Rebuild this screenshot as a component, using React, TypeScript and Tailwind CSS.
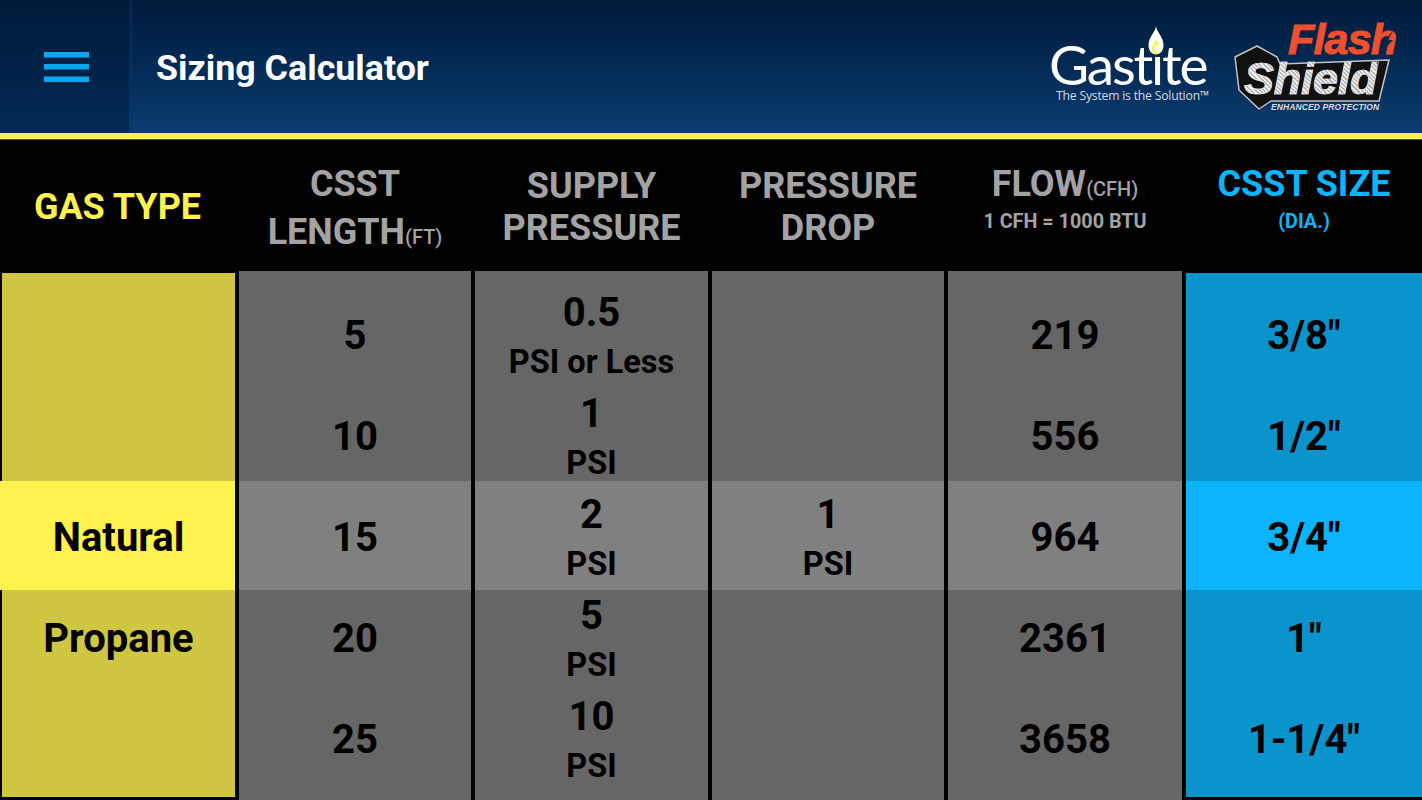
const roboto = "font-['Roboto',sans-serif]";

type Cell = { main?: string; sub?: string };

const columns: { dim: string; band: string; cells: Cell[]; first?: boolean; last?: boolean }[] = [
  { dim: "bg-[#cfc741]", band: "bg-[#fff24f]", first: true, cells: [{}, {}, { main: "Natural" }, { main: "Propane" }, {}] },
  { dim: "bg-[#666666]", band: "bg-[#808080]", cells: [{ main: "5" }, { main: "10" }, { main: "15" }, { main: "20" }, { main: "25" }] },
  {
    dim: "bg-[#666666]",
    band: "bg-[#808080]",
    cells: [
      { main: "0.5", sub: "PSI or Less" },
      { main: "1", sub: "PSI" },
      { main: "2", sub: "PSI" },
      { main: "5", sub: "PSI" },
      { main: "10", sub: "PSI" },
    ],
  },
  { dim: "bg-[#666666]", band: "bg-[#808080]", cells: [{}, {}, { main: "1", sub: "PSI" }, {}, {}] },
  { dim: "bg-[#666666]", band: "bg-[#808080]", cells: [{ main: "219" }, { main: "556" }, { main: "964" }, { main: "2361" }, { main: "3658" }] },
  { dim: "bg-[#0b93cb]", band: "bg-[#0db4fb]", last: true, cells: [{ main: "3/8\u2033" }, { main: "1/2\u2033" }, { main: "3/4\u2033" }, { main: "1\u2033" }, { main: "1-1/4\u2033" }] },
];

function Gastite() {
  return (
    <div className="relative w-[165px] h-[80px] mt-[26px]">
      <svg className="absolute left-[99px] top-0" width="16" height="29" viewBox="0 0 16 29">
        <path d="M8 0C8.6 6 15.5 11 15.5 19C15.5 25 12 28.5 8 28.5C4 28.5 0.5 25 0.5 19C0.5 11 7.4 6 8 0Z" fill="#ffffff" />
        <path d="M8 14C9.5 17 12 19 12 22.5C12 25.5 10 28 8 28C6 28 4 25.5 4 22.5C4 19 6.5 17 8 14Z" fill="#fff04a" />
      </svg>
      <div className="absolute left-[0px] top-[15px] font-['Lato',sans-serif] text-[55px] leading-[46px] tracking-[-2.2px] text-white whitespace-nowrap">
        Gastite
      </div>
      <div className="absolute left-[7px] top-[63px] font-['Open_Sans',sans-serif] text-[12.2px] leading-[13px] tracking-[-0.2px] text-[#d3dbe6] whitespace-nowrap">
        The System is the Solution™
      </div>
    </div>
  );
}

function FlashShield() {
  return (
    <div className="relative w-[168px] h-[96px] ml-[18px] mt-[18px]">
      <div className="absolute left-[56px] top-[3px] font-['Liberation_Sans',sans-serif] font-bold italic text-[43px] leading-[36px] tracking-[-0.8px] [-webkit-text-stroke:1px_#f0502e] text-[#f0502e] whitespace-nowrap">
        Flash
      </div>
      <svg className="absolute left-0 top-0" width="168" height="96" viewBox="0 0 168 96">
        <path d="M161 13L150 25L155 25L148 36L161 22L156 22Z" fill="#06274d" />
        <path d="M25 28L3 39L7 72L27 91L39 83H147L157 42L48 46L45 39Z" fill="#111111" stroke="#c4c4c4" strokeWidth="1.5" strokeLinejoin="round" />
      </svg>
      <div className="absolute left-[12px] top-[41px] font-['Liberation_Sans',sans-serif] font-bold italic text-[45px] leading-[40px] tracking-[-0.3px] [-webkit-text-stroke:0.7px_#e2e2e2] bg-[repeating-linear-gradient(45deg,#f4f4f4_0_1.5px,#b4b4b4_1.5px_3px)] bg-clip-text text-transparent whitespace-nowrap">
        Shield
      </div>
      <div className="absolute left-[39px] top-[85px] font-['Liberation_Sans',sans-serif] font-bold italic text-[8.5px] leading-[9px] tracking-[0.1px] text-[#d8dde3] whitespace-nowrap">
        ENHANCED PROTECTION
      </div>
    </div>
  );
}

function Header() {
  return (
    <header className="flex h-[133px] shrink-0 bg-gradient-to-b from-[#001a3a] to-[#0b3c70]">
      <div className="flex w-[129px] items-center justify-center bg-gradient-to-b from-[#001a3a] to-[#032a55] pl-[4px]">
        <svg width="45" height="30" viewBox="0 0 45 30">
          <rect x="0" y="0" width="45" height="5.5" fill="#0ba7ee" />
          <rect x="0" y="12" width="45" height="5.5" fill="#0ba7ee" />
          <rect x="0" y="24.5" width="45" height="5.5" fill="#0ba7ee" />
        </svg>
      </div>
      <div className="w-[4px] bg-gradient-to-b from-[#02234a] to-[#0a3a6c]" />
      <h1 className={`${roboto} ml-[23px] self-center pt-[3px] text-[35.8px] leading-[40px] font-bold text-white`}>Sizing Calculator</h1>
      <div className="ml-auto flex pr-[22px]">
        <Gastite />
        <FlashShield />
      </div>
    </header>
  );
}

function Headings() {
  const grey = "text-[#a3a3a3]";
  return (
    <div className={`${roboto} grid h-[131px] shrink-0 grid-cols-[235px_232px_233px_232px_234px_1fr] gap-x-1 text-center font-bold`}>
      <div className="flex items-center justify-center pt-[2px] text-[36px] leading-[40px] text-[#fff24f]">GAS TYPE</div>
      <div className={`flex flex-col items-center justify-center pt-[10px] text-[36px] leading-[48px] ${grey}`}>
        <div>CSST</div>
        <div>
          LENGTH<span className="text-[20px] font-medium">(FT)</span>
        </div>
      </div>
      <div className={`flex flex-col items-center justify-center pt-[2px] text-[36px] leading-[42px] ${grey}`}>
        <div>SUPPLY</div>
        <div>PRESSURE</div>
      </div>
      <div className={`flex flex-col items-center justify-center pt-[2px] text-[36px] leading-[42px] ${grey}`}>
        <div>PRESSURE</div>
        <div>DROP</div>
      </div>
      <div className={`flex flex-col items-center justify-center pb-[15px] ${grey}`}>
        <div className="text-[36px] leading-[44px]">
          FLOW<span className="text-[20px] font-medium">(CFH)</span>
        </div>
        <div className="-mt-[1px] text-[19.8px] leading-[24px]">1 CFH = 1000 BTU</div>
      </div>
      <div className="flex flex-col items-center justify-center pb-[16px] text-[#0db4fb]">
        <div className="text-[36px] leading-[44px]">CSST SIZE</div>
        <div className="mt-[4px] text-[19.8px] leading-[24px]">(DIA.)</div>
      </div>
    </div>
  );
}

function Column({ col }: { col: (typeof columns)[number] }) {
  const edge = col.first || col.last;
  return (
    <div
      className={`relative ${col.dim} ${col.first ? "border-l-2 border-t-2 border-b-[3px] border-black" : ""} ${
        col.last ? "border-t-2 border-b-[3px] border-black" : ""
      }`}
    >
      <div className={`absolute right-0 h-[109px] ${edge ? "top-[208px]" : "top-[210px]"} ${col.first ? "left-[-2px]" : "left-0"} ${col.band}`} />
      <div className={`relative flex flex-col ${edge ? "pt-[12px]" : "pt-[14px]"}`}>
        {col.cells.map((c, i) => (
          <div key={i} className="flex h-[101px] flex-col items-center justify-center text-black">
            {c.main && <div className={`font-bold text-[40px] ${c.sub ? "leading-[46px] pt-[6px]" : "leading-[44px]"}`}>{c.main}</div>}
            {c.sub && <div className="font-bold text-[32.5px] leading-[50px] mt-[1px]">{c.sub}</div>}
          </div>
        ))}
      </div>
    </div>
  );
}

export default function App() {
  return (
    <div className="flex h-[800px] w-[1422px] flex-col overflow-hidden bg-black">
      <Header />
      <div className="h-[6px] shrink-0 bg-[#fff24f]" />
      <div className="h-[1px] shrink-0 bg-[#5c5716]" />
      <Headings />
      <div className={`${roboto} grid min-h-0 flex-1 grid-cols-[235px_232px_233px_232px_234px_1fr] gap-x-1`}>
        {columns.map((col, i) => (
          <Column key={i} col={col} />
        ))}
      </div>
    </div>
  );
}
